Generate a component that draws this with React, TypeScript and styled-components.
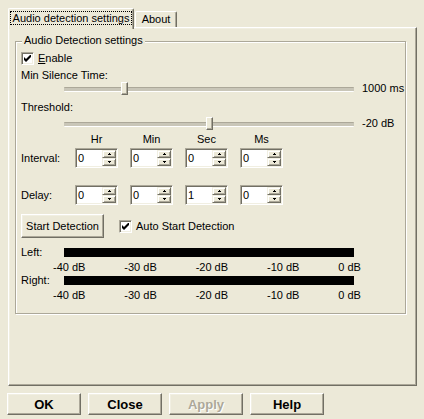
import React from 'react';
import styled, { createGlobalStyle } from 'styled-components';

const GlobalStyle = createGlobalStyle`
  html, body { margin: 0; padding: 0; background: #ECE9D8; }
  body {
    font-family: "Liberation Sans", Arial, sans-serif;
    font-size: 11px;
    color: #000;
  }
  * { box-sizing: border-box; }
`;

const Dialog = styled.div`
  width: 424px;
  height: 419px;
  padding-top: 8px;
  display: flex;
  flex-direction: column;
  background: #ECE9D8;
`;

const TabStrip = styled.div`
  display: flex;
  align-items: flex-end;
  height: 19px;
  margin-left: 8px;
  position: relative;
  z-index: 1;
`;

const Tab = styled.div<{ $active?: boolean; $width: number }>`
  display: flex;
  align-items: center;
  justify-content: center;
  width: ${p => p.$width}px;
  height: ${p => (p.$active ? 21 : 16)}px;
  margin-bottom: ${p => (p.$active ? -2 : 0)}px;
  padding-bottom: ${p => (p.$active ? 2 : 0)}px;
  margin-left: ${p => (p.$active ? 0 : 1)}px;
  background: #ECE9D8;
  border-top: 1px solid #fff;
  border-left: 1px solid #fff;
  border-right: 1px solid #716F64;
  box-shadow: inset -1px 0 #ACA899;
  border-radius: 2px 2px 0 0;
  line-height: 13px;
`;

const FocusText = styled.span`
  padding: 0 2px;
  line-height: 12px;
  outline: 1px dotted #000;
`;

const Panel = styled.div`
  margin-left: 8px;
  width: 409px;
  height: 359px;
  border-top: 1px solid #fff;
  border-left: 1px solid #fff;
  border-right: 1px solid #716F64;
  border-bottom: 1px solid #716F64;
  box-shadow: inset -1px -1px #ACA899, inset 1px 1px #F1EFE2;
  padding: 13px 0 0 6px;
`;

const Group = styled.div`
  width: 391px;
  height: 273px;
  border: 1px solid #ACA899;
  box-shadow: inset 1px 1px #fff, 1px 1px #fff;
  padding-left: 5px;
  display: flex;
  flex-direction: column;
`;

const GroupTitle = styled.div`
  align-self: flex-start;
  margin: -8px 0 0 1px;
  padding: 0 2px;
  height: 13px;
  line-height: 13px;
  background: #ECE9D8;
`;

const CheckRow = styled.label<{ $mt?: number }>`
  display: flex;
  align-items: center;
  gap: 4px;
  height: 13px;
  line-height: 13px;
  margin-top: ${p => p.$mt ?? 0}px;
`;

const CheckBox = styled.span`
  width: 13px;
  height: 13px;
  flex: none;
  background: #fff;
  border-top: 1px solid #ACA899;
  border-left: 1px solid #ACA899;
  border-bottom: 1px solid #fff;
  border-right: 1px solid #fff;
  box-shadow: inset 1px 1px #716F64, inset -1px -1px #F1EFE2;
  display: flex;
  align-items: center;
  justify-content: center;
`;

const Label = styled.div<{ $mt?: number }>`
  height: 13px;
  line-height: 13px;
  margin-top: ${p => p.$mt ?? 0}px;
`;

const SliderRow = styled.div<{ $mt?: number }>`
  display: flex;
  align-items: center;
  gap: 8px;
  height: 13px;
  padding-left: 43px;
  margin-top: ${p => p.$mt ?? 0}px;
  line-height: 13px;
`;

const Track = styled.div`
  position: relative;
  width: 290px;
  height: 13px;
  flex: none;
  &::before {
    content: '';
    position: absolute;
    left: 0;
    right: 0;
    top: 5px;
    height: 3px;
    border-top: 1px solid #ACA899;
    border-bottom: 1px solid #fff;
    background: #C9C6B8;
    border-radius: 1px;
  }
`;

const Thumb = styled.div`
  position: absolute;
  top: 0;
  width: 7px;
  height: 13px;
  background: #ECE9D8;
  border-top: 1px solid #fff;
  border-left: 1px solid #fff;
  border-right: 1px solid #716F64;
  border-bottom: 1px solid #716F64;
  box-shadow: inset -1px -1px #ACA899;
`;

const TimeGrid = styled.div<{ $mt?: number; $h: number }>`
  display: grid;
  grid-template-columns: 42px repeat(4, 43px);
  column-gap: 12px;
  align-items: center;
  height: ${p => p.$h}px;
  margin-top: ${p => p.$mt ?? 0}px;
  line-height: 13px;
`;

const Header = styled.div`
  text-align: center;
`;

const SpinBox = styled.div`
  height: 20px;
  display: flex;
  background: #fff;
  border-top: 1px solid #ACA899;
  border-left: 1px solid #ACA899;
  border-bottom: 1px solid #fff;
  border-right: 1px solid #fff;
  box-shadow: inset 1px 1px #716F64, inset -1px -1px #F1EFE2;
  padding: 1px;
`;

const SpinValue = styled.div`
  flex: 1;
  padding-left: 1px;
  line-height: 16px;
`;

const SpinButtons = styled.div`
  display: flex;
  flex-direction: column;
  width: 14px;
`;

const SpinBtn = styled.div`
  height: 8px;
  background: #ECE9D8;
  border-top: 1px solid #F1EFE2;
  border-left: 1px solid #F1EFE2;
  border-right: 1px solid #716F64;
  border-bottom: 1px solid #716F64;
  box-shadow: inset 1px 1px #fff, inset -1px -1px #ACA899;
  display: flex;
  align-items: center;
  justify-content: center;
`;

const ActionRow = styled.div`
  display: flex;
  align-items: center;
  gap: 15px;
  height: 24px;
  margin-top: 9px;
`;

const Button = styled.button<{ $w: number; $h: number; $bold?: boolean }>`
  width: ${p => p.$w}px;
  height: ${p => p.$h}px;
  padding: 0;
  margin: 0;
  font-family: "Liberation Sans", Arial, sans-serif;
  font-size: ${p => (p.$bold ? 13 : 11)}px;
  font-weight: ${p => (p.$bold ? 700 : 400)};
  color: #000;
  background: #ECE9D8;
  border-top: 1px solid #fff;
  border-left: 1px solid #fff;
  border-right: 1px solid #716F64;
  border-bottom: 1px solid #716F64;
  box-shadow: inset -1px -1px #ACA899, inset 1px 1px #F1EFE2;
  &:disabled {
    color: #ACA899;
    text-shadow: 1px 1px #fff;
  }
`;

const MeterRow = styled.div<{ $mt: number }>`
  display: flex;
  align-items: center;
  height: 9px;
  margin-top: ${p => p.$mt}px;
  line-height: 13px;
`;

const MeterLabel = styled.div`
  width: 43px;
`;

const MeterBar = styled.div`
  width: 290px;
  height: 9px;
  background: #000;
`;

const Scale = styled.div`
  display: flex;
  justify-content: space-between;
  width: 340px;
  padding-left: 32px;
  height: 13px;
  line-height: 13px;
  margin-top: 4px;
`;

const ButtonBar = styled.div`
  display: flex;
  gap: 7px;
  padding-left: 7px;
  margin-top: 7px;
`;

const Check = () => (
  <svg width="7" height="7" viewBox="0 0 7 7">
    <path d="M0 2 L2 4 L7 -1 L7 2 L2 7 L0 5 Z" fill="#000" />
  </svg>
);

const UpArrow = () => (
  <svg width="3" height="2" viewBox="0 0 3 2" shapeRendering="crispEdges">
    <rect x="1" y="0" width="1" height="1" fill="#000" />
    <rect x="0" y="1" width="3" height="1" fill="#000" />
  </svg>
);

const DownArrow = () => (
  <svg width="3" height="2" viewBox="0 0 3 2" shapeRendering="crispEdges">
    <rect x="0" y="0" width="3" height="1" fill="#000" />
    <rect x="1" y="1" width="1" height="1" fill="#000" />
  </svg>
);

const Slider = ({ ratio, value, mt }: { ratio: number; value: string; mt?: number }) => (
  <SliderRow $mt={mt}>
    <Track>
      <Thumb style={{ left: Math.round(ratio * (290 - 7)) }} />
    </Track>
    <span>{value}</span>
  </SliderRow>
);

const Spin = ({ value }: { value: string }) => (
  <SpinBox>
    <SpinValue>{value}</SpinValue>
    <SpinButtons>
      <SpinBtn><UpArrow /></SpinBtn>
      <SpinBtn><DownArrow /></SpinBtn>
    </SpinButtons>
  </SpinBox>
);

const scale = ['-40 dB', '-30 dB', '-20 dB', '-10 dB', '0 dB'];

export default function App() {
  return (
    <>
      <GlobalStyle />
      <Dialog>
        <TabStrip>
          <Tab $active $width={126}>
            <FocusText>Audio detection settings</FocusText>
          </Tab>
          <Tab $width={42}>About</Tab>
        </TabStrip>
        <Panel>
          <Group>
            <GroupTitle>Audio Detection settings</GroupTitle>
            <CheckRow $mt={5}>
              <CheckBox><Check /></CheckBox>
              <span><u>E</u>nable</span>
            </CheckRow>
            <Label $mt={4}>Min Silence Time:</Label>
            <Slider ratio={0.2} value="1000 ms" />
            <Label $mt={6}>Threshold:</Label>
            <Slider ratio={0.5} value="-20 dB" mt={3} />
            <TimeGrid $h={13} $mt={3}>
              <span />
              <Header>Hr</Header>
              <Header>Min</Header>
              <Header>Sec</Header>
              <Header>Ms</Header>
            </TimeGrid>
            <TimeGrid $h={20} $mt={2}>
              <span>Interval:</span>
              <Spin value="0" />
              <Spin value="0" />
              <Spin value="0" />
              <Spin value="0" />
            </TimeGrid>
            <TimeGrid $h={20} $mt={17}>
              <span>Delay:</span>
              <Spin value="0" />
              <Spin value="0" />
              <Spin value="1" />
              <Spin value="0" />
            </TimeGrid>
            <ActionRow>
              <Button $w={83} $h={24}>Start Detection</Button>
              <CheckRow>
                <CheckBox><Check /></CheckBox>
                <span>Auto Start Detection</span>
              </CheckRow>
            </ActionRow>
            <MeterRow $mt={10}>
              <MeterLabel>Left:</MeterLabel>
              <MeterBar />
            </MeterRow>
            <Scale>
              {scale.map(s => <span key={s}>{s}</span>)}
            </Scale>
            <MeterRow $mt={2}>
              <MeterLabel>Right:</MeterLabel>
              <MeterBar />
            </MeterRow>
            <Scale>
              {scale.map(s => <span key={s}>{s}</span>)}
            </Scale>
          </Group>
        </Panel>
        <ButtonBar>
          <Button $w={74} $h={22} $bold>OK</Button>
          <Button $w={74} $h={22} $bold>Close</Button>
          <Button $w={74} $h={22} $bold disabled>Apply</Button>
          <Button $w={74} $h={22} $bold>Help</Button>
        </ButtonBar>
      </Dialog>
    </>
  );
}
